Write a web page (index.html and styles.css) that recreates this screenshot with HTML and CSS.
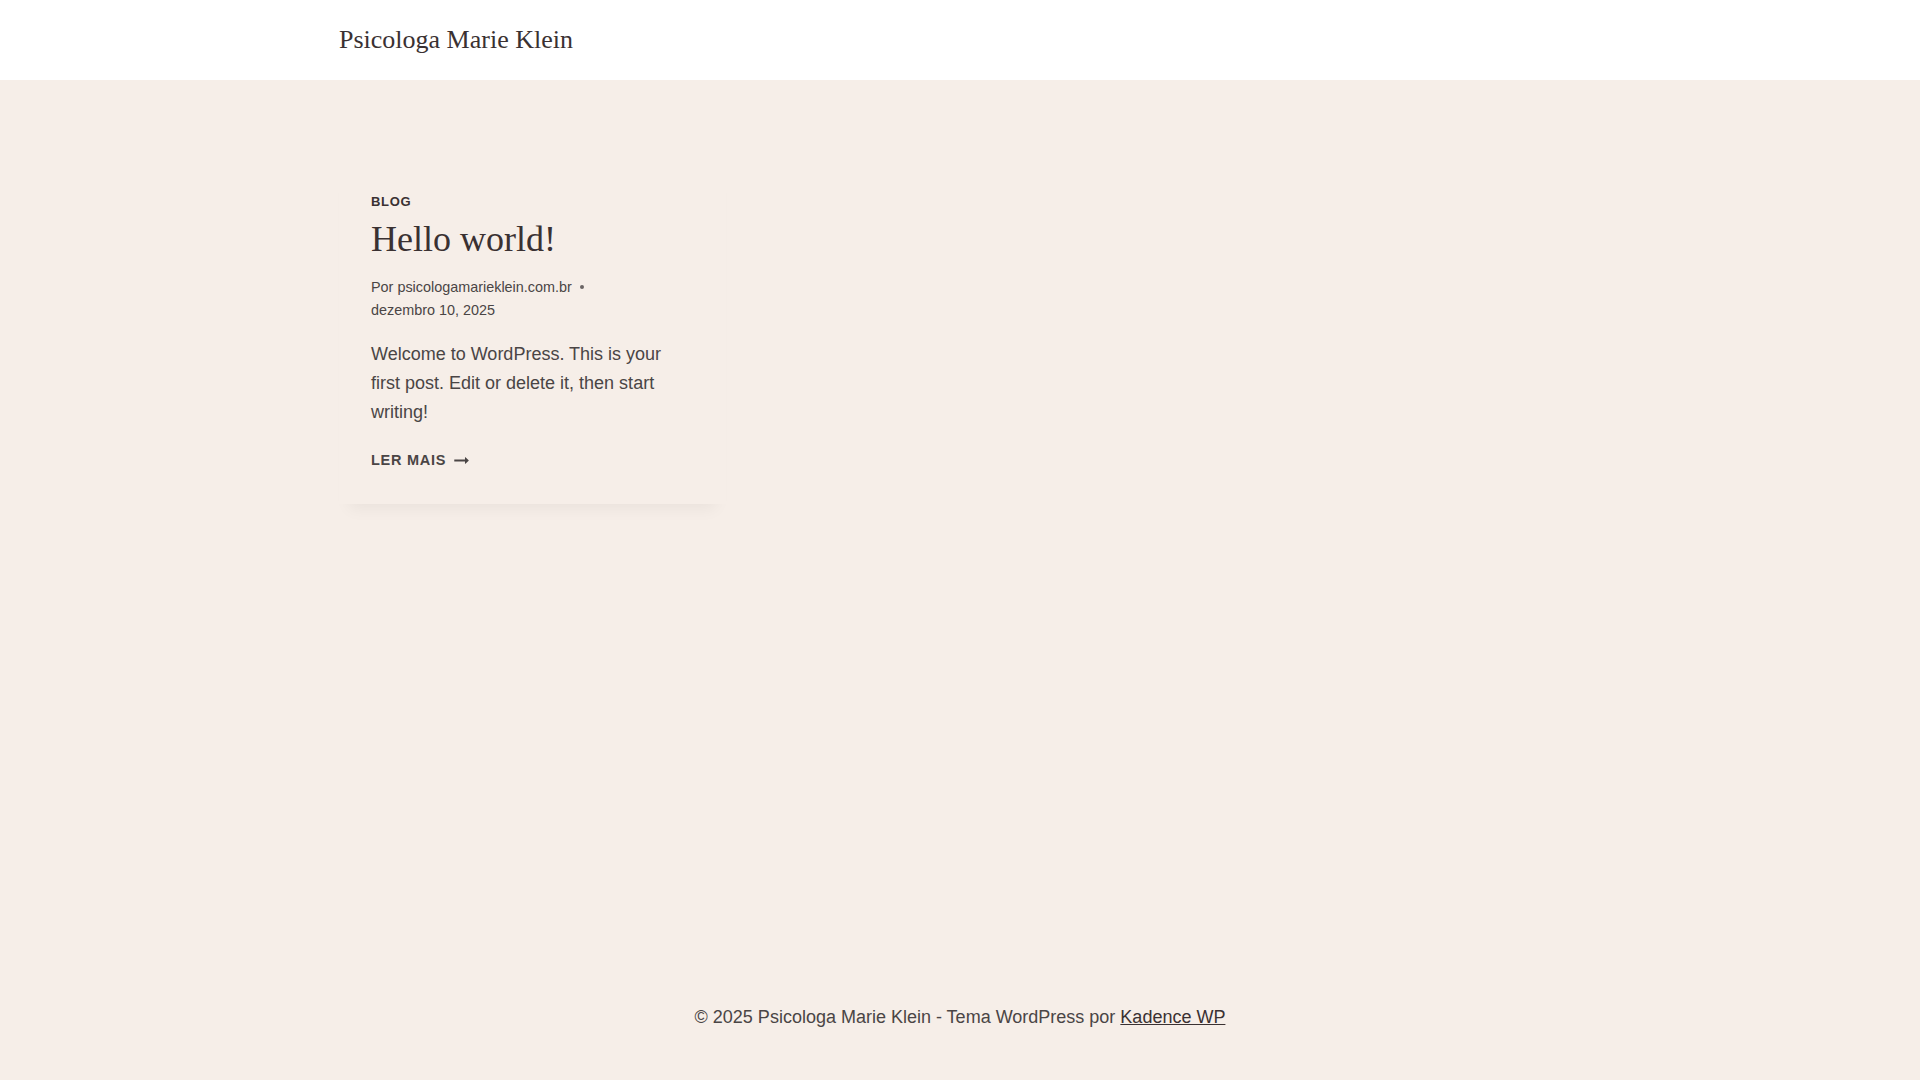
FILE: index.html
```html
<!DOCTYPE html>
<html lang="pt-BR">

<head>
    <meta charset="utf-8">
    <title>Psicologa Marie Klein</title>
    <link rel="stylesheet" href="styles.css">
</head>

<body>
    <header class="site-header">
        <div class="site-container header-inner">
            <a class="site-title" href="#">Psicologa Marie Klein</a>
        </div>
    </header>

    <main class="site-main">
        <div class="site-container">
            <div class="post-grid">
                <article class="loop-entry">
                    <div class="entry-taxonomies">
                        <a href="#">Blog</a>
                    </div>
                    <h2 class="entry-title"><a href="#">Hello world!</a></h2>
                    <div class="entry-meta">
                        <span class="meta-author">Por <a href="#">psicologamarieklein.com.br</a></span>
                        <span class="meta-dot"></span>
                        <span class="meta-date">dezembro 10, 2025</span>
                    </div>
                    <div class="entry-summary">
                        <p>Welcome to WordPress. This is your first post. Edit or delete it, then start writing!</p>
                    </div>
                    <div class="more-link-wrap">
                        <a class="more-link" href="#">Ler mais
                            <!-- arrow-right-alt -->
                            <svg class="more-arrow" viewBox="0 0 27 28" aria-hidden="true">
                                <path d="M27 13.953c0 0.141-0.063 0.281-0.156 0.375l-6 5.531c-0.156 0.141-0.359 0.172-0.547 0.094-0.172-0.078-0.297-0.25-0.297-0.453v-3.5h-19.5c-0.281 0-0.5-0.219-0.5-0.5v-3c0-0.281 0.219-0.5 0.5-0.5h19.5v-3.5c0-0.203 0.109-0.375 0.297-0.453s0.391-0.047 0.547 0.078l6 5.469c0.094 0.094 0.156 0.219 0.156 0.359v0z"></path>
                            </svg>
                        </a>
                    </div>
                </article>
            </div>
        </div>
    </main>

    <footer class="site-footer">
        <div class="site-container">
            <p class="footer-text">&copy; 2025 Psicologa Marie Klein - Tema WordPress por <a href="#">Kadence WP</a></p>
        </div>
    </footer>
</body>

</html>
```

FILE: styles.css
```css
/* Base */
body {
    margin: 0;
    min-height: 100vh;
    display: flex;
    flex-direction: column;
    background-color: #f6eee8;
    color: #4a4545;
    font-family: "Liberation Sans", Arial, sans-serif;
    font-size: 18px;
    line-height: 1.6;
}

a {
    color: inherit;
    text-decoration: none;
}

.site-container {
    max-width: 1290px;
    margin: 0 auto;
    padding: 0 24px;
    box-sizing: border-box;
    width: 100%;
}

/* Header */
.site-header {
    background-color: #fff;
}

.header-inner {
    height: 80px;
    display: flex;
    align-items: center;
}

.site-title {
    font-family: "Liberation Serif", "Times New Roman", serif;
    font-size: 26px;
    line-height: 1.2;
    color: #3a3132;
}

/* Posts */
.site-main {
    flex: 1;
    padding-top: 80px;
}

.post-grid {
    display: grid;
    grid-template-columns: repeat(3, 1fr);
    gap: 40px;
}

.loop-entry {
    padding: 32px;
    background-color: #f6eee8;
    box-shadow: 0 15px 15px -10px rgba(0, 0, 0, 0.05);
}

.entry-taxonomies {
    font-size: 13px;
    line-height: 1.5;
    font-weight: bold;
    text-transform: uppercase;
    letter-spacing: 0.05em;
    color: #3a3132;
}

.entry-title {
    margin: 0;
    font-family: "Liberation Serif", "Times New Roman", serif;
    font-weight: normal;
    font-size: 36px;
    line-height: 1.5;
    color: #3a3132;
}

.entry-meta {
    display: flex;
    flex-wrap: wrap;
    align-items: center;
    margin-top: 10px;
    font-size: 14.4px;
    line-height: 23px;
    color: #4a4545;
}

.meta-dot {
    width: 4px;
    height: 4px;
    border-radius: 50%;
    background-color: #6a6464;
    margin: 0 8px;
}

.entry-summary p {
    margin: 18px 0 0;
    line-height: 29px;
}

.more-link-wrap {
    margin-top: 22px;
    font-size: 14.5px;
    line-height: 1.6;
}

.more-link {
    display: inline-flex;
    align-items: center;
    font-weight: bold;
    text-transform: uppercase;
    letter-spacing: 0.05em;
    color: #4a4545;
}

.more-arrow {
    width: 15px;
    height: 15px;
    margin-left: 8px;
    fill: currentColor;
}

/* Footer */
.site-footer {
    padding: 30px 0 48px;
}

.footer-text {
    margin: 0;
    text-align: center;
}

.footer-text a {
    color: #3a3132;
    text-decoration: underline;
}
```
